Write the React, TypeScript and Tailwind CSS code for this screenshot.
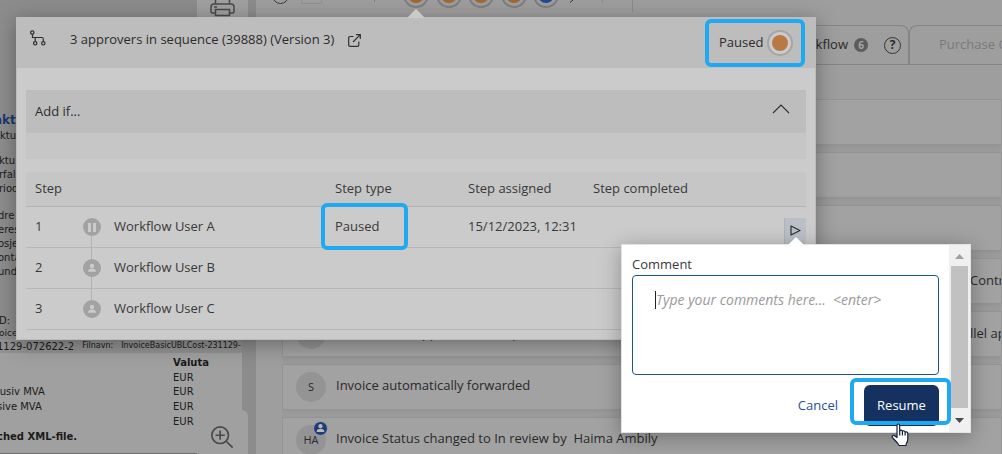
import React from "react";

const label = "text-[13px] leading-5";

function Dot({ color }: { color: string }) {
  return (
    <span className="flex size-[26px] shrink-0 items-center justify-center rounded-full border-2 border-[#7e7e7e]">
      <span className={`size-4 rounded-full ${color}`} />
    </span>
  );
}

function Card({ children }: { children?: React.ReactNode }) {
  return (
    <li className="flex h-[46px] shrink-0 items-center overflow-hidden border border-[#949494] bg-[#a2a2a2] px-[13px] shadow-[0_2px_6px_rgba(0,0,0,0.08)] whitespace-pre">
      {children}
    </li>
  );
}

function Avatar({ text, badge }: { text: string; badge?: boolean }) {
  return (
    <span className="relative mr-[10px] flex size-[30px] shrink-0 items-center justify-center rounded-full bg-[#949494] text-[11px] text-[#2a2a2a]">
      {text}
      {badge && (
        <svg className="absolute -top-[4px] -right-[2px] size-[15px]" viewBox="0 0 15 15">
          <circle cx="7.5" cy="7.5" r="7" fill="#1d3c78" stroke="#a2a2a2" />
          <circle cx="7.5" cy="5.2" r="2.1" fill="#b9b9b9" />
          <path d="M3.6 11c0-2.400 1.600-3.200 3.900-3.200s3.900.8 3.900 3.200z" fill="#b9b9b9" />
        </svg>
      )}
    </span>
  );
}

function InvoicePreview() {
  return (
    <section className="relative flex w-[256px] shrink-0 flex-col overflow-hidden bg-[#8c8c8c] font-['DejaVu_Sans',sans-serif] text-[10px] text-[#1b1b1b]">
      <div className="flex h-[24px] shrink-0 justify-end">
        <button aria-label="Print" className="flex w-[51px] items-start justify-center bg-[#a0a0a0]">
          <svg className="-mt-[5px] h-[22px] w-[25px]" viewBox="0 0 25 22" fill="none" stroke="#494949" strokeWidth="1.500">
            <path d="M5.500 9V2h14v7M5 18H2.500A1.500 1.500 0 0 1 1 16.500V12a3 3 0 0 1 3-3h17a3 3 0 0 1 3 3v4.500a1.500 1.500 0 0 1-1.500 1.500H20M5.500 20.500v-6h14v6zM4 12h3" />
          </svg>
        </button>
        <span className="w-2" />
      </div>
      <div className="mr-[14px] flex flex-1 flex-col overflow-hidden bg-[#8e8e8e] whitespace-pre">
        <div className="mt-[88px] -ml-[6px] h-[16px] text-[12px] leading-4 font-bold text-[#1b3a6f]">akt</div>
        <div className="h-[26px] leading-[15px]">ktu</div>
        <div className="-ml-px leading-[14px]">
          ktu{"\n"}rfal{"\n"}riod
        </div>
        <div className="mt-[13px] -ml-[2px] leading-[14px]">
          dre{"\n"}eres{"\n"}osje{"\n"}onta{"\n"}unde
        </div>
        <div className="mt-[36px] -ml-px leading-[12px]">
          D:{"\n"}
          <span className="text-[9px]">oice</span>
        </div>
        <div className="-ml-[3px] flex h-[14px] shrink-0 items-center gap-2 bg-[#929292]">
          <span className="text-[10px]">1129-072622-2</span>
          <span className="text-[8px]">Filnavn:</span>
          <span className="text-[8px]">InvoiceBasicUBLCost-231129-</span>
        </div>
        <div className="-ml-[3px] flex-1 bg-[#a0a0a0]">
          <table className="w-full border-b border-[#6c6c6c] text-left text-[10px] leading-[14px]">
            <thead>
              <tr>
                <th className="w-[176px] pt-[3px]" />
                <th className="pt-[3px] font-bold">Valuta</th>
              </tr>
            </thead>
            <tbody>
              <tr><td className="h-[15px]" /><td>EUR</td></tr>
              <tr><td>lusiv MVA</td><td>EUR</td></tr>
              <tr><td className="h-[15px]">sive MVA</td><td>EUR</td></tr>
              <tr><td className="h-[15px]" /><td>EUR</td></tr>
              <tr><td className="h-[24px] pt-px align-top font-bold" colSpan={2}>ched XML-file.</td></tr>
            </tbody>
          </table>
        </div>
      </div>
      <button aria-label="Zoom in" className="absolute right-[8px] bottom-0 flex h-[44px] w-[51px] items-start justify-center rounded-t-md bg-[#a0a0a0] pt-4 pr-[2px]">
        <svg className="size-[24px]" viewBox="0 0 26 26" fill="none" stroke="#494949" strokeWidth="1.800">
          <circle cx="11" cy="10" r="9" />
          <path d="M11 5v10M6 10h10M17.500 16.500l7 7" />
        </svg>
      </button>
    </section>
  );
}

function ActivityPanel() {
  return (
    <section className="flex min-w-0 flex-1 flex-col bg-[#9e9e9e]">
      <div className="flex h-[25px] shrink-0 items-start pl-4">
        <span className="-mt-[13px] size-[17px] rounded-full border border-[#3c3c3c]" />
        <span className="-mt-[16px] ml-3 h-5 w-[21px] border border-[#919191]" />
        <span className="ml-[52px] h-[2px] w-px bg-[#7e7e7e]" />
        <span className="-mt-[18px] ml-[28px] flex w-[156px] justify-between">
          <Dot color="bg-[#a2672f]" />
          <Dot color="bg-[#a2672f]" />
          <Dot color="bg-[#a2672f]" />
          <Dot color="bg-[#a2672f]" />
          <Dot color="bg-[#214a94]" />
        </span>
        <svg className="ml-[10px] h-[3px] w-[5px]" viewBox="0 0 5 3"><path d="M4 0L1 2.500" stroke="#333" fill="none" /></svg>
        <span className="ml-[28px] h-[3px] w-px bg-[#8a8a8a]" />
        <span className="ml-[29px] h-3 w-px bg-[#8a8a8a]" />
      </div>
      <nav className="flex h-[40px] shrink-0 border-b border-[#858585]">
        <a href="#workflow" className="flex w-[653px] shrink-0 items-center justify-end rounded-tr-lg border-t border-r border-[#858585] pr-[7px] text-[13px] text-[#2b2b2b]">
          Workflow
          <span className="ml-[6px] flex size-[14px] items-center justify-center rounded-full bg-[#5c5c5c] text-[10px] font-bold text-[#a5a5a5]">6</span>
          <span className="ml-4 flex size-[17px] items-center justify-center rounded-full border border-[#333] text-[12px] font-bold">?</span>
        </a>
        <a href="#orders" className="flex min-w-0 flex-1 items-center overflow-hidden rounded-tl-lg border-t border-l border-[#858585] pl-[29px] text-[13px] whitespace-nowrap text-[#7a7a7a]">
          Purchase Orders
        </a>
      </nav>
      <ul className={`mt-[34px] ml-[26px] flex flex-1 flex-col gap-[7px] overflow-hidden text-[#2a2a2a] ${label}`}>
        <Card />
        <Card />
        <Card />
        <Card><span className="-mt-[2px] ml-[674px]">Control</span></Card>
        <Card>
          <Avatar text="" />
          <span className="-mt-[2px] w-[634px] shrink-0">Workflow:  3 approvers in sequence</span>
          <span className="-mt-[2px]">llel approval</span>
        </Card>
        <Card><Avatar text="S" /><span className="-mt-[4px]">Invoice automatically forwarded</span></Card>
        <Card><Avatar text="HA" badge /><span className="-mt-[4px]">Invoice Status changed to In review by  Haima Ambily</span></Card>
      </ul>
    </section>
  );
}

function StepIcon({ kind, last }: { kind: "pause" | "user"; last?: boolean }) {
  return (
    <span className="relative flex h-10 items-center">
      {!last && <span className="absolute top-[29px] left-[8px] h-[23px] w-px bg-[#b2b2b2]" />}
      <svg className="relative size-[18px]" viewBox="0 0 18 18">
        <circle cx="9" cy="9" r="9" fill="#a2a2a2" />
        {kind === "pause" ? (
          <path d="M5 5h3v9H5zM10 5h3v9h-3z" fill="#cbcbcb" />
        ) : (
          <g fill="#cbcbcb">
            <circle cx="9" cy="7" r="2.200" />
            <path d="M5 12.800c0-2.400 1.500-3.300 4-3.300s4 .9 4 3.300z" />
          </g>
        )}
      </svg>
    </span>
  );
}

const steps = [
  { n: 1, kind: "pause" as const, user: "Workflow User A", type: "Paused", date: "15/12/2023, 12:31" },
  { n: 2, kind: "user" as const, user: "Workflow User B", type: "", date: "" },
  { n: 3, kind: "user" as const, user: "Workflow User C", type: "", date: "" },
];

function WorkflowPopup() {
  return (
    <section className={`absolute top-[17px] left-[16px] w-[800px] border border-[#bcbcbc] bg-[#cbcbcb] pb-[9px] text-[#393939] shadow-[0_4px_20px_rgba(0,0,0,0.35)] ${label}`}>
      <svg className="absolute -top-[9px] left-[390px] h-[9px] w-[18px]" viewBox="0 0 18 9">
        <path d="M0 9L9 0l9 9z" fill="#cbcbcb" />
      </svg>
      <header className="flex h-[50px] items-center bg-[#bdbdbd] pr-[10px] pl-[13px] text-[#2c2c2c]">
        <svg className="-mt-[10px] size-4 shrink-0" viewBox="0 0 16 16" fill="none" stroke="#303030" strokeWidth="1.200">
          <circle cx="2.300" cy="2.500" r="1.700" />
          <circle cx="5.200" cy="13.300" r="1.700" />
          <circle cx="13.300" cy="13.300" r="1.700" />
          <path d="M2.500 4.300v3.200h9.300q1.500 0 1.500 1.500v2.500M5.200 7.500v4" />
        </svg>
        <h1 className="-mt-[8px] ml-6">3 approvers in sequence (39888) (Version 3)</h1>
        <a href="#version" aria-label="Open version" className="-mt-[6px] ml-[14px]">
          <svg className="size-[13px]" viewBox="0 0 13 13" fill="none" stroke="#303030" strokeWidth="1.200">
            <path d="M5.500 2.500H2A1.300 1.300 0 0 0 .700 3.800v7.200A1.300 1.300 0 0 0 2 12.300h7.500a1.300 1.300 0 0 0 1.300-1.300V7.500M8 .700h4.300V5M12.300.700L5 8" />
          </svg>
        </a>
        <span className="ml-auto flex h-12 w-[100px] items-center justify-between rounded-md border-4 border-[#1ea9f2] pr-2 pl-[10px]">
          <span className="pb-[2px]">Paused</span>
          <span className="flex size-[26px] items-center justify-center rounded-full border-2 border-[#a5a5a5] bg-[#cccccc]">
            <span className="size-4 rounded-full bg-[#b87a42]" />
          </span>
        </span>
      </header>
      <div className="mx-[9px] mt-[22px]">
        <button className="flex h-[43px] w-full items-center justify-between bg-[#bdbdbd] pr-4 pb-[2px] pl-[9px] text-[#2c2c2c]">
          Add if...
          <svg className="-mt-1 h-[10px] w-[18px]" viewBox="0 0 18 10" fill="none" stroke="#303030" strokeWidth="1.100">
            <path d="M1 9l8-8 8 8" />
          </svg>
        </button>
        <div className="h-[26px] bg-[#c6c6c6]" />
        <table className="mt-[13px] w-full table-fixed border-collapse text-left">
          <thead>
            <tr className="h-[34px] border-b border-[#b2b2b2] bg-[#c6c6c6]">
              <th className="w-[57px] pb-[2px] pl-[9px] font-normal">Step</th>
              <th className="w-[31px]" />
              <th className="w-[221px]" />
              <th className="w-[133px] pb-[2px] font-normal">Step type</th>
              <th className="w-[125px] pb-[2px] font-normal">Step assigned</th>
              <th className="pb-[2px] font-normal">Step completed</th>
              <th className="w-[22px]" />
            </tr>
          </thead>
          <tbody>
            {steps.map((s) => (
              <tr key={s.n} className="h-[41px] border-b border-[#b7b7b7]">
                <td className="pb-px pl-[9px]">{s.n}</td>
                <td><StepIcon kind={s.kind} last={s.n === 3} /></td>
                <td className="pb-px">{s.user}</td>
                <td className="relative pb-px">
                  {s.type}
                  {s.type && <span className="absolute -top-[4px] -left-[14px] h-[47px] w-[87px] rounded-md border-4 border-[#1ea9f2]" />}
                </td>
                <td className="pb-px whitespace-nowrap">{s.date}</td>
                <td />
                <td className="p-0">
                  {s.n === 1 && (
                    <button aria-label="Resume step" className="mt-[8px] flex h-[26px] w-[22px] items-center justify-center border-l border-[#aeb3b7] bg-[#bac0c5]">
                      <svg className="h-[11px] w-[11px]" viewBox="0 0 11 11" fill="none" stroke="#303030" strokeWidth="1.200">
                        <path d="M1 1v9l9-4.500z" strokeLinejoin="round" />
                      </svg>
                    </button>
                  )}
                </td>
              </tr>
            ))}
          </tbody>
        </table>
      </div>
    </section>
  );
}

function CommentPopover() {
  return (
    <div role="dialog" aria-label="Comment" className={`absolute top-[244px] left-[621px] flex h-[189px] w-[350px] border border-[#e3e3e3] bg-white text-[#393939] shadow-[0_4px_20px_rgba(0,0,0,0.3)] ${label}`}>
      <svg className="absolute -top-[9px] left-[165px] h-[10px] w-[18px]" viewBox="0 0 18 10">
        <path d="M0 10L9 1l9 9z" fill="#fff" />
      </svg>
      <form className="flex min-w-0 flex-1 flex-col pt-[9px] pr-[10px] pl-[10px]" onSubmit={(e) => e.preventDefault()}>
        <label htmlFor="comment" className="mb-px">Comment</label>
        <div className="relative flex">
          <textarea
            id="comment"
            placeholder="Type your comments here...  <enter>"
            className="h-[100px] w-full resize-none rounded-[4px] border border-[#1f4fa0] px-[23px] py-[14px] outline-none placeholder:text-[14px] placeholder:text-[#9a9a9a] placeholder:italic"
          />
          <span className="absolute top-4 left-[23px] h-[18px] w-px bg-[#222]" />
        </div>
        <div className="relative mt-[10px] flex items-center justify-end gap-[26px]">
          <button type="button" className="pb-[2px] text-[#2450a4]">Cancel</button>
          <button type="submit" className="h-[41px] w-[75px] rounded-md bg-[#14315f] pb-[2px] text-white">Resume</button>
          <span className="absolute -top-[7px] -right-[12px] h-[47px] w-[101px] rounded-md border-4 border-[#1ea9f2]" />
        </div>
      </form>
      <div className="flex w-[21px] flex-col items-center bg-[#f0f0f0]">
        <svg className="h-[21px] w-[17px] shrink-0" viewBox="0 0 17 21"><path d="M4 14l4.500-5 4.500 5z" fill="#a0a0a0" /></svg>
        <span className="h-[142px] w-[17px] bg-[#c1c1c1]" />
        <svg className="h-[24px] w-[17px] shrink-0" viewBox="0 0 17 24"><path d="M4 10l4.500 5 4.500-5z" fill="#4a4a4a" /></svg>
      </div>
      <svg className="absolute top-[178px] left-[269px] h-[24px] w-[19px]" viewBox="0 0 19 24" fill="#fff" stroke="#14213a" strokeWidth="1.200" strokeLinejoin="round">
        <path d="M6 14.500V2.500Q6 1 7.300 1t1.400 1.500V8q.3-1 1.400-.9 1.200.1 1.300 1.400.5-.9 1.500-.7 1.200.2 1.200 1.500.5-.7 1.400-.5 1.300.3 1.300 1.700V16q0 2.500-1.500 4.500L15 22.500H8.200L6.500 20 1.800 15Q.700 13.600 1.600 12.800t2.300.1z" />
        <path d="M8.700 8v4.500M11.400 8.500v4M14.100 9.500v3" fill="none" />
      </svg>
    </div>
  );
}

export default function App() {
  return (
    <main className="relative flex h-screen w-full overflow-hidden bg-[#9e9e9e] font-['Open_Sans','Noto_Sans',sans-serif]">
      <InvoicePreview />
      <ActivityPanel />
      <WorkflowPopup />
      <CommentPopover />
    </main>
  );
}
